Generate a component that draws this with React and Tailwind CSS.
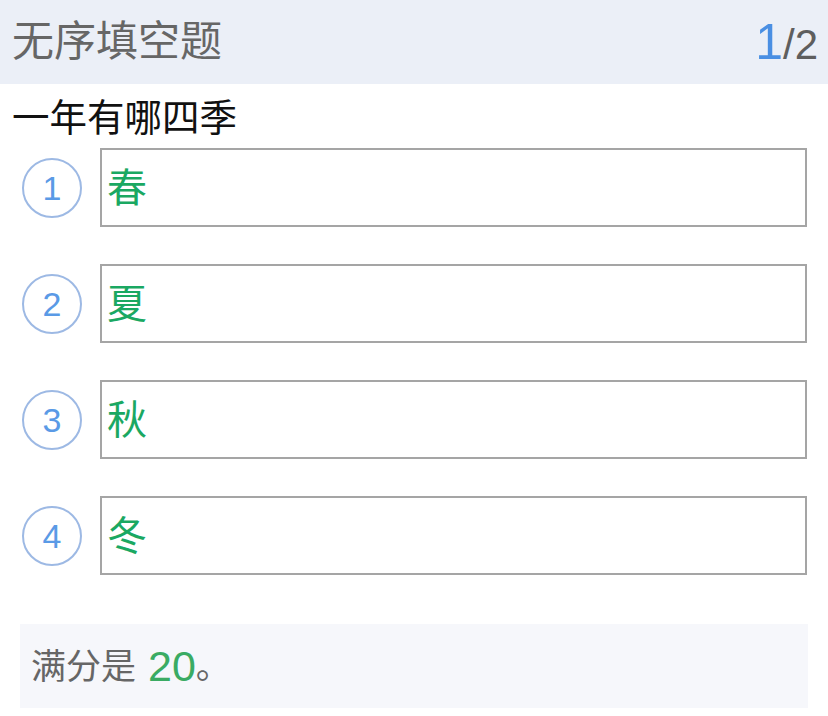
const FONT = "font-['Liberation_Sans','Noto_Sans_CJK_SC',sans-serif]";

const answers = ["春", "夏", "秋", "冬"];

export default function App() {
  return (
    <div className={`w-[828px] h-[716px] bg-white ${FONT}`}>
      <div className="h-[84px] bg-[#ebeff7] flex items-center justify-between pl-[12px] pr-[10px]">
        <span className="text-[42px] leading-none text-[#666]">无序填空题</span>
        <span className="flex items-baseline leading-none">
          <span className="text-[50px] text-[#4a8fe3]">1</span>
          <span className="text-[42px] text-[#5e5e5e]">/2</span>
        </span>
      </div>

      <div className="pl-[12px] pt-[14px] text-[37.5px] leading-[40px] text-[#111]">
        一年有哪四季
      </div>

      <div className="mt-[10px] flex flex-col gap-[37px]">
        {answers.map((a, i) => (
          <div key={i} className="flex items-center pl-[22px] pr-[21px]">
            <div className="w-[60px] h-[60px] rounded-full border-2 border-[#9db9e4] flex items-center justify-center text-[34px] leading-none text-[#5a9ae6] shrink-0">
              {i + 1}
            </div>
            <div className="ml-[18px] flex-1 h-[79px] border-2 border-[#a5a5a5] flex items-center pl-[5px] text-[40px] leading-none text-[#1aa862]">
              {a}
            </div>
          </div>
        ))}
      </div>

      <div className="mt-[49px] mx-[20px] w-[788px] h-[84px] bg-[#f6f7fb] flex items-center pl-[11px]">
        <span className="text-[35px] leading-none text-[#666]">满分是</span>
        <span className="text-[43px] leading-none text-[#3aab63] ml-[12px]">20</span>
        <span className="text-[35px] leading-none text-[#666]">。</span>
      </div>
    </div>
  );
}
